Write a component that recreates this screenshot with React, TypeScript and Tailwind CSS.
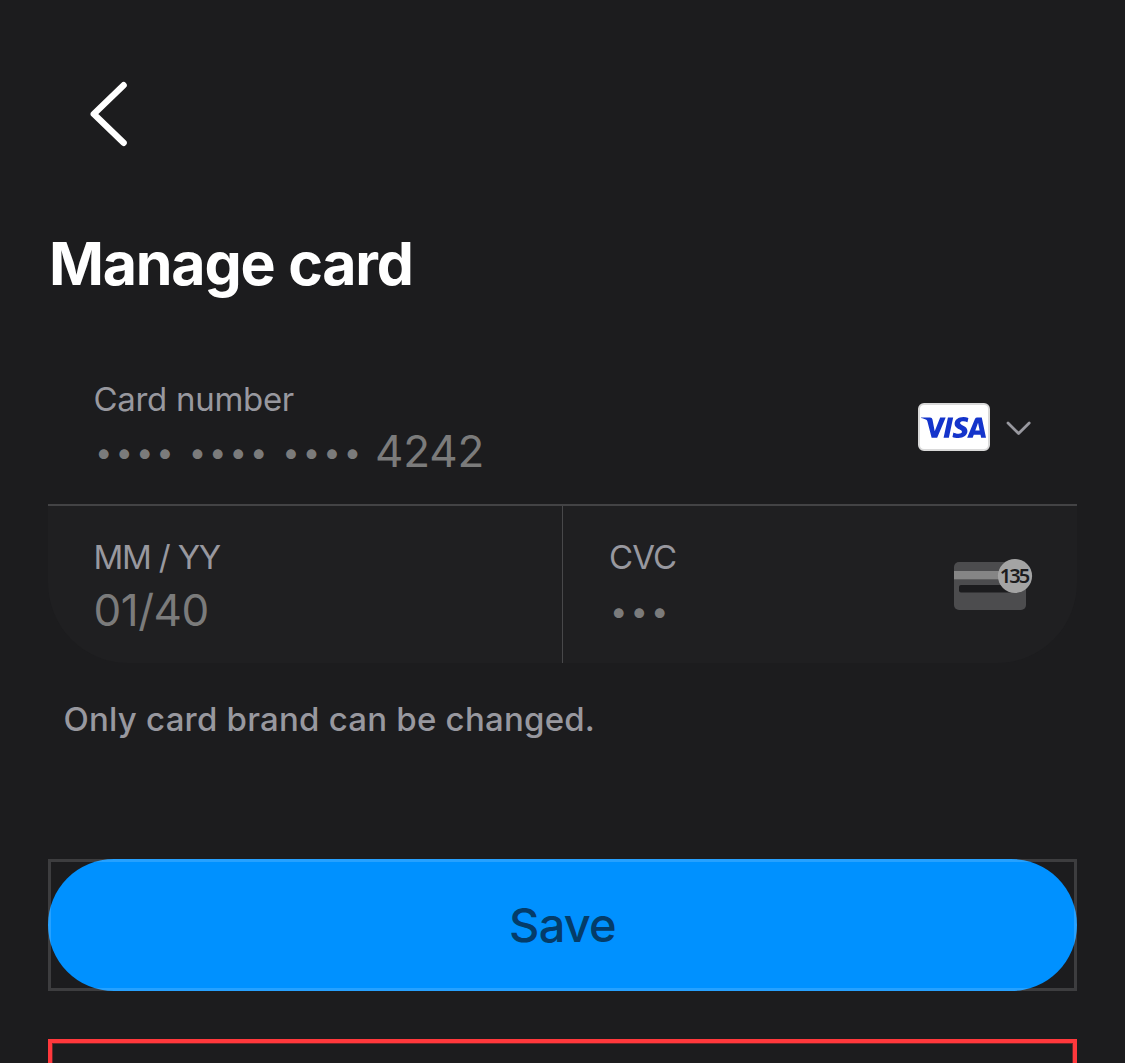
import React from "react";
import { SiVisa } from "react-icons/si";

function BackIcon() {
  return (
    <svg className="block h-[70px] w-[44px]" viewBox="0 0 44 70" fill="none">
      <path d="M37.6 6.2 L7.8 35 L37.6 63.8" stroke="#fff" strokeWidth="6.4" strokeLinecap="round" strokeLinejoin="round" />
    </svg>
  );
}

function CvcIcon() {
  return (
    <svg className="block h-[54px] w-[80px]" viewBox="0 0 80 54">
      <rect x="0" y="4" width="72" height="48" rx="5" fill="#4c4c4e" />
      <rect x="0" y="13" width="60" height="8.3" fill="#858585" />
      <rect x="5" y="27" width="62" height="7.6" rx="2" fill="#1c1c1e" />
      <circle cx="61" cy="18" r="17.1" fill="#a4a4a4" />
      <text x="60" y="25.2" textAnchor="middle" fontFamily="Noto Sans" fontWeight="600" fontSize="20" letterSpacing="-1.9" fill="#1c1c1e">
        135
      </text>
    </svg>
  );
}

export default function App() {
  return (
    <main className="flex h-[1063px] w-[1125px] flex-col overflow-hidden bg-[#1c1c1e] px-12 font-['Inter',sans-serif]">
      <header className="shrink-0 pt-[79px] pl-[38px]">
        <button className="block" aria-label="Back">
          <BackIcon />
        </button>
      </header>

      <h1 className="mt-[78.5px] ml-px shrink-0 text-[59px] leading-[72px] font-bold tracking-[-1.2px] whitespace-nowrap text-white [word-spacing:1px]">
        Manage card
      </h1>

      <section className="mt-[48.5px] flex h-[156px] shrink-0 items-start justify-between pt-[31px] pr-[45px] pl-[46px]">
        <div>
          <div className="-ml-[0.5px] h-10 text-[33px] leading-10 tracking-[-0.3px] text-[#98989f]">Card number</div>
          <div className="mt-[4px] flex h-[56px] items-center text-[44px] leading-[56px] whitespace-nowrap text-[#7b7b7b]">
            <span className="w-[281px] pt-px pl-px text-[31px] tracking-[3px] [word-spacing:0.2px]">•••• •••• ••••</span>
            <span className="tracking-[-0.2px]">4242</span>
          </div>
        </div>
        <div className="flex items-center pt-[24px]">
          <div className="flex h-12 w-[72px] items-center justify-center overflow-hidden rounded-md border-2 border-[#d9d9d9] bg-white pr-[2px]">
            <SiVisa className="size-[65px] shrink-0 text-[#1434cb]" />
          </div>
          <svg className="mt-[2px] ml-4 block h-4 w-[26px]" viewBox="0 0 26 16" fill="none">
            <path d="M2 3 L12.6 13.6 L23.2 3" stroke="#98989f" strokeWidth="2.8" strokeLinecap="round" strokeLinejoin="round" />
          </svg>
        </div>
      </section>

      <section className="flex h-[159px] shrink-0 overflow-hidden rounded-b-[80px] bg-[#1f1f21]">
        <div className="flex w-[515px] flex-col border-t-2 border-t-[#434345] pt-[31px] pl-[46px]">
          <div className="-ml-[0.5px] h-10 text-[33px] leading-10 tracking-[-1.4px] text-[#98989f] [word-spacing:0.6px]">MM / YY</div>
          <div className="mt-[5px] -ml-[0.5px] h-[56px] text-[44px] leading-[56px] tracking-[-0.5px] text-[#7b7b7b]">01/40</div>
        </div>
        <div className="-ml-px flex flex-1 flex-col border-t-2 border-t-[#434345]">
          <div className="flex flex-1 justify-between border-l border-l-[#48484a] pt-[31px] pr-[43px] pl-[46px]">
            <div>
              <div className="h-10 text-[33px] leading-10 tracking-[-0.9px] text-[#98989f]">CVC</div>
              <div className="mt-[6px] ml-px h-[56px] text-[31px] leading-[56px] tracking-[3px] text-[#7b7b7b]">•••</div>
            </div>
            <div className="pt-[21px]">
              <CvcIcon />
            </div>
          </div>
        </div>
      </section>

      <p className="mt-[36px] shrink-0 pl-[15.5px] text-[33px] leading-10 font-medium tracking-[0.22px] whitespace-nowrap text-[#98989f]">
        Only card brand can be changed.
      </p>

      <button className="relative mt-[120px] h-[132px] shrink-0">
        <span className="flex h-full items-center justify-center rounded-full bg-[#0091ff] text-[47px] leading-[60px] font-medium tracking-[-0.8px] text-[#043c69]">Save</span>
        <span className="absolute inset-0 border-[3px] border-white/15" />
      </button>

      <div className="mt-12 h-20 shrink-0 border-[4px] border-[#ff383c]">
        <div className="h-full border border-[#6e2528]" />
      </div>
    </main>
  );
}
